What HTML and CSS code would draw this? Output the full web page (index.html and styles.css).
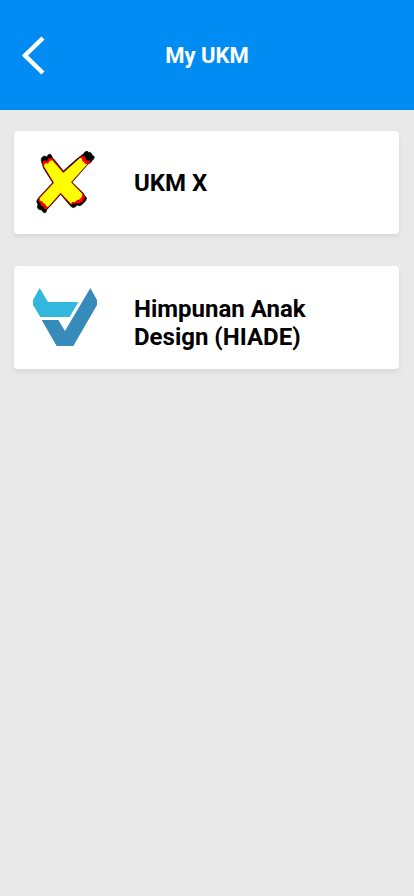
FILE: index.html
```html
<!DOCTYPE html>
<html lang="id">
<head>
<meta charset="utf-8">
<meta name="viewport" content="width=device-width, initial-scale=1">
<title>My UKM</title>
<link rel="stylesheet" href="styles.css">
</head>
<body>
<header class="topbar">
  <button class="back" type="button" aria-label="Kembali">
    <svg width="24" height="40" viewBox="0 0 24 40" aria-hidden="true"><path d="M21 2 3 19.500 21 37" fill="none" stroke="#fff" stroke-width="4.500"/></svg>
  </button>
  <h1 class="title">My UKM</h1>
</header>
<main class="list">
  <a class="card" href="#ukm-x">
    <svg class="logo" viewBox="21 33 192 192" aria-hidden="true">
      <path fill="#000" stroke="#000" stroke-width="2" stroke-linejoin="round" d="M46 62 46 55 52 49 58 48 62 52 66 45 72 42 77 47 79 54 83 57 112 93 150 59 172 42 178 35 184 33 188 38 192 37 197 41 199 46 205 50 203 57 198 62 194 68 186 72 138 127 172 160 175 166 182 174 179 182 172 190 165 196 158 197 153 194 150 199 142 203 136 200 131 195 104 163 70 201 62 209 60 217 53 218 47 210 38 208 34 202 36 194 32 184 36 176 40 171 80 128 53 85 48 70Z"/>
      <path fill="#f00" d="M49 71 51 64 57 61 63 64 66 57 73 53 80 56 112 96 167 49 172 47 177 51 179 57 185 62 193 64 192 69 184 73 137 127 171 161 178 173 173 176 172 184 165 187 159 191 152 188 146 193 140 190 137 195 132 192 104 161 67 202 61 208 56 207 53 200 46 197 43 190 37 183 38 175 82 128 55 84Z"/>
      <path fill="#ff0" d="M54 79 56 71 61 69 66 72 69 65 75 61 80 62 112 99 162 54 167 55 169 64 174 66 177 71 184 72 135 127 169 162 167 172 159 179 153 180 147 186 139 186 135 191 104 158 66 201 61 199 58 192 52 190 49 184 43 183 41 175 84 128 57 84Z"/>
    </svg>
    <span class="name">UKM X</span>
  </a>
  <a class="card" href="#hiade">
    <svg class="logo" viewBox="21 18 192 192" aria-hidden="true">
      <path fill="#31b8dc" d="M41 24 66 66h91l-26 45H43L21 75V60z"/>
      <path fill="#378bbb" d="M193 24 213 60V75L142 198H92L47 120h50l20 33z"/>
    </svg>
    <span class="name name-long">Himpunan Anak Design (HIADE)</span>
  </a>
</main>
</body>
</html>
```
FILE: styles.css
```css
* {
  box-sizing: border-box;
}

body {
  margin: 0;
  min-height: 100vh;
  background: #e9e9e9;
  color: #000;
  font-family: Roboto, "Liberation Sans", sans-serif;
}

.topbar {
  display: grid;
  grid-template-columns: 24px 1fr 24px;
  align-items: center;
  height: 110px;
  padding: 2px 22px 0;
  background: #008cf2;
  color: #fff;
}

.back {
  display: flex;
  padding: 0;
  border: 0;
  background: none;
  cursor: pointer;
}

.title {
  margin: 0;
  font-size: 22px;
  line-height: 28px;
  font-weight: 700;
  text-align: center;
}

.list {
  display: flex;
  flex-direction: column;
  gap: 32px;
  padding: 21px 15px 21px 14px;
}

.card {
  display: flex;
  align-items: center;
  gap: 37px;
  min-height: 103px;
  padding: 18px 19px;
  border-radius: 4px;
  background: #fff;
  box-shadow: 0 3px 5px rgba(0, 0, 0, 0.07);
  color: inherit;
  text-decoration: none;
}

.logo {
  flex: none;
  width: 64px;
  height: 64px;
}

.name {
  max-width: 200px;
  font-size: 24px;
  line-height: 28px;
  font-weight: 700;
}

.name-long {
  padding-top: 10px;
}
```
